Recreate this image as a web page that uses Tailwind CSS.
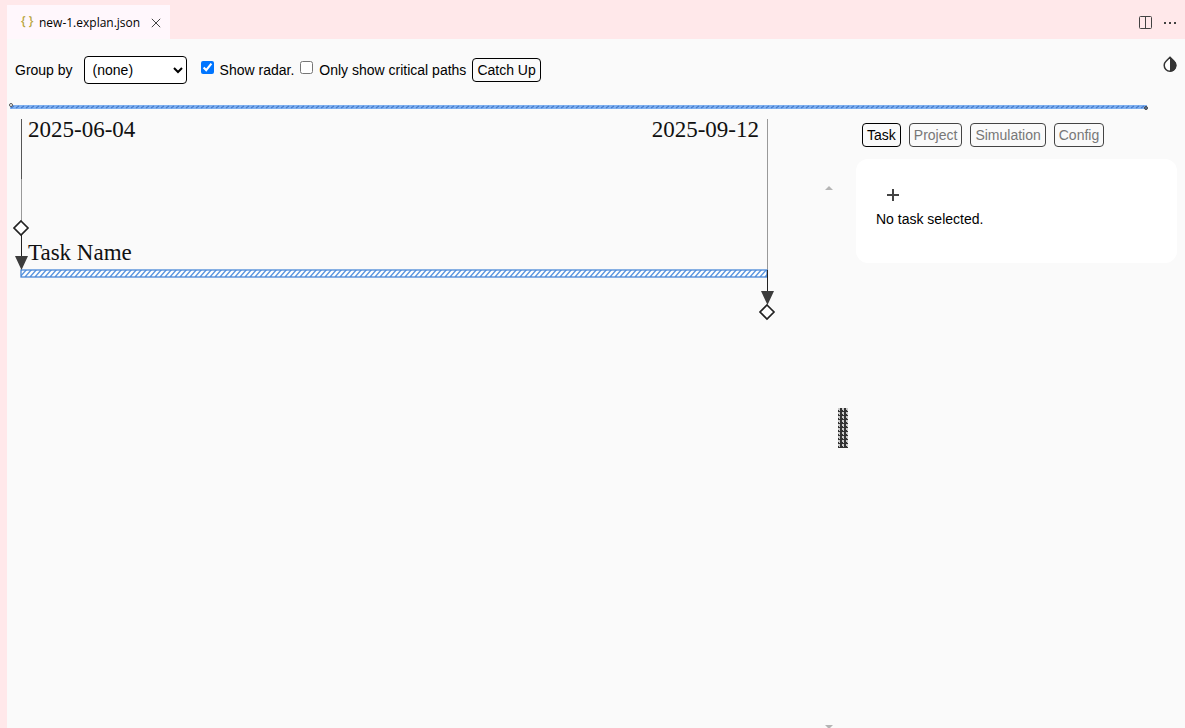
<!DOCTYPE html>
<html lang="en">
<head>
    <meta charset="UTF-8">
    <meta name="viewport" content="width=device-width, initial-scale=1.0">
    <title>new-1.explan.json</title>
    <script src="https://cdn.jsdelivr.net/npm/@tailwindcss/browser@4"></script>
</head>
<body class="flex flex-col h-screen overflow-hidden bg-[#ffe8ea] pl-[7px] pt-[5px] text-sm text-black font-['Liberation_Sans',sans-serif]">

    <!-- Editor tabs -->
    <header class="flex h-[34px] shrink-0 items-stretch justify-between">
        <div class="flex items-center bg-[#fff7fc] pl-3 pr-2 pt-[2px] font-['Open_Sans',sans-serif] text-xs">
            <span class="w-5 pl-[2px] pb-1 text-xs font-semibold text-[#b7a53b]" aria-hidden="true">{ }</span>
            <span>new-1.explan.json</span>
            <button type="button" aria-label="Close" class="ml-[10px] flex h-4 w-3 items-center justify-center">
                <svg class="h-[10px] w-[10px]" viewBox="0 0 10 10" fill="none" stroke="#424242"><path d="M.8.8l8.4 8.4M9.2.8L.8 9.2"/></svg>
            </button>
        </div>
        <div class="flex items-center gap-3 pr-2">
            <button type="button" aria-label="Split Editor">
                <svg class="h-[13px] w-[13px]" viewBox="0 0 13 13" fill="none" stroke="#424242"><rect x=".5" y=".5" width="12" height="12" rx="1"/><path d="M6.5.5v12"/></svg>
            </button>
            <button type="button" aria-label="More Actions">
                <svg class="h-[13px] w-[13px]" viewBox="0 0 13 13" fill="#424242"><rect y="6" width="2" height="2"/><rect x="5" y="6" width="2" height="2"/><rect x="10" y="6" width="2" height="2"/></svg>
            </button>
        </div>
    </header>

    <main class="flex min-h-0 flex-1 flex-col bg-[#fafafa]">
        <!-- Toolbar -->
        <div class="flex h-16 shrink-0 items-center px-2 pb-[3px]">
            <label for="group-by">Group by</label>
            <select id="group-by" class="ml-[11px] h-7 w-[103px] rounded border border-black bg-white px-1">
                <option>(none)</option>
            </select>
            <input id="radar" type="checkbox" checked class="ml-[14px] mb-1 h-[13px] w-[13px]">
            <label for="radar" class="ml-[6px]">Show radar.</label>
            <input id="critical" type="checkbox" class="ml-[6px] mb-1 h-[13px] w-[13px]">
            <label for="critical" class="ml-[6px]">Only show critical paths</label>
            <button type="button" class="ml-[6px] h-6 rounded border border-black px-1">Catch Up</button>
            <button type="button" aria-label="Toggle dark mode" class="ml-auto mb-3">
                <svg class="h-4 w-[14px]" viewBox="0 0 14 16"><path d="M7 1.2L3 5.2a5.800 5.800 0 1 0 8 0z" fill="#fff" stroke="#333" stroke-width="1.5"/><path d="M7 .8l4.500 4.200A6.300 6.300 0 0 1 7 15.700z" fill="#333"/></svg>
            </button>
        </div>

        <!-- Radar -->
        <div class="h-4 shrink-0 pr-9">
            <svg class="h-2 w-full" role="img" aria-label="Radar">
                <defs>
                    <pattern id="radar-hatch" width="5" height="4" patternUnits="userSpaceOnUse">
                        <rect width="5" height="4" fill="#80b1f0"/>
                        <path d="M1 3l3-2" stroke="#4479cc" stroke-width="1.2"/>
                    </pattern>
                </defs>
                <svg x="3" y="2" width="100%" height="4" style="width: calc(100% - 5px)"><rect width="100%" height="4" fill="url(#radar-hatch)"/></svg>
                <circle cx="4" cy="2" r="1.5" fill="#fff" stroke="#555"/>
                <svg x="100%" overflow="visible"><circle cx="-3" cy="5" r="1.5" fill="#5d7ca6" stroke="#444"/></svg>
            </svg>
        </div>

        <div class="flex min-h-0 flex-1">
            <!-- Chart -->
            <section class="relative min-w-0 flex-1">
                <svg class="h-[210px] w-full overflow-visible" role="img" aria-label="Schedule chart">
                    <defs>
                        <pattern id="task-hatch" width="5" height="6" patternUnits="userSpaceOnUse" x="14" y="151">
                            <rect width="5" height="6" fill="#fff"/>
                            <path d="M-1 7L6 -1M-6 7L1 -1M4 7L11 -1" stroke="#5c97e0" stroke-width="1.4"/>
                        </pattern>
                    </defs>
                    <path d="M14.5 0v60" stroke="#555"/>
                    <path d="M14.5 60v43" stroke="#999"/>
                    <path d="M760.5 0v151" stroke="#999"/>
                    <g class="font-['Liberation_Serif',serif] text-[23px]" fill="#111">
                        <text x="21" y="18">2025-06-04</text>
                        <text x="752" y="18" text-anchor="end">2025-09-12</text>
                        <text x="21" y="141">Task Name</text>
                    </g>
                    <rect x="14" y="151" width="746" height="7" fill="url(#task-hatch)" stroke="#4a88d8" stroke-width="1.3"/>
                    <path d="M14.5 116v22M760.5 151v22" stroke="#222"/>
                    <path d="M8 137h13l-6.5 14zM754 172h13l-6.5 14z" fill="#3c3c3c"/>
                    <path d="M14 102l7 7-7 7-7-7zM760 186l7 7-7 7-7-7z" fill="#fff" stroke="#222" stroke-width="1.7"/>
                </svg>
                <svg class="absolute right-[5px] top-[67px] h-1 w-2" viewBox="0 0 8 4" fill="#b5b5b5"><path d="M0 4l4-4 4 4z"/></svg>
                <svg class="absolute right-[5px] -bottom-[1px] h-1 w-2" viewBox="0 0 8 4" fill="#b5b5b5"><path d="M0 0h8L4 4z"/></svg>
            </section>

            <!-- Divider -->
            <div class="flex w-[10px] shrink-0 items-center pt-[9px]">
                <svg class="h-10 w-[10px]" role="separator" aria-label="Resize panels">
                    <defs>
                        <pattern id="grip" width="4" height="4" patternUnits="userSpaceOnUse" x="-1">
                            <rect width="4" height="4" fill="#333"/>
                            <path d="M1 0h2v3h-1v-1h-1z" fill="#ccc"/>
                        </pattern>
                    </defs>
                    <rect width="10" height="40" fill="url(#grip)"/>
                </svg>
            </div>

            <!-- Side panel -->
            <aside class="w-[337px] shrink-0 px-2 pt-1">
                <div class="flex gap-2 px-[6px]" role="tablist">
                    <button type="button" role="tab" aria-selected="true" class="h-6 rounded border border-black px-1">Task</button>
                    <button type="button" role="tab" class="h-6 rounded border border-[#444] px-1 text-[#777]">Project</button>
                    <button type="button" role="tab" class="h-6 rounded border border-[#444] px-1 text-[#777]">Simulation</button>
                    <button type="button" role="tab" class="h-6 rounded border border-[#444] px-1 text-[#777]">Config</button>
                </div>
                <div class="mt-3 h-[104px] rounded-xl bg-white px-5 pt-[30px]">
                    <button type="button" aria-label="Add task" class="ml-[11px] block">
                        <svg class="h-3 w-3" viewBox="0 0 12 12" stroke="#444" stroke-width="2"><path d="M0 6h12M6 0v12"/></svg>
                    </button>
                    <p class="mt-2">No task selected.</p>
                </div>
            </aside>
        </div>
    </main>

</body>
</html>
